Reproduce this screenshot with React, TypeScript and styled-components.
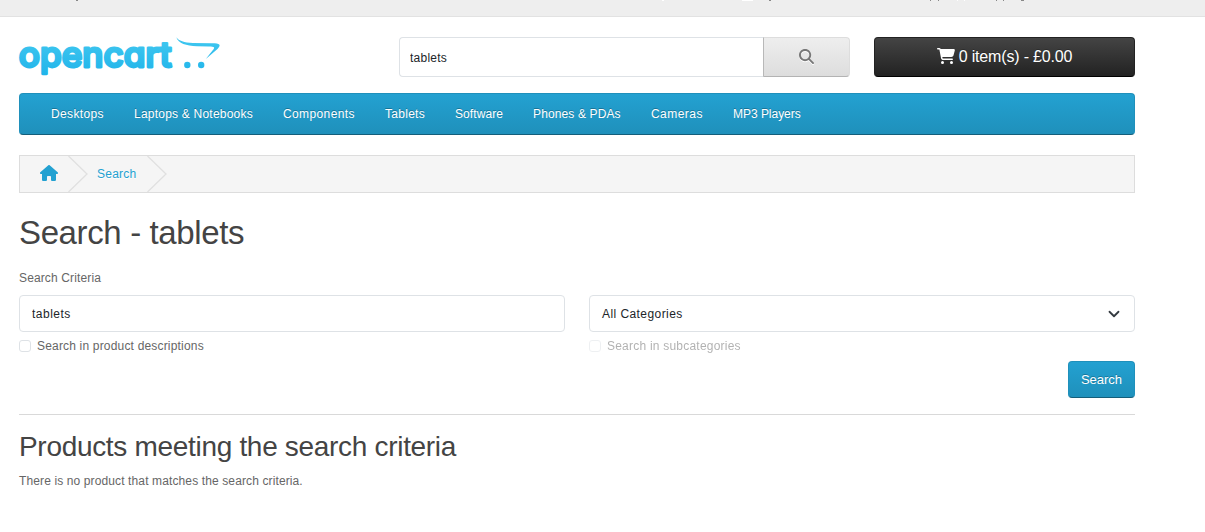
import React from "react";
import styled, { createGlobalStyle } from "styled-components";
import { FaCartShopping, FaHouse, FaMagnifyingGlass } from "react-icons/fa6";

const GlobalStyle = createGlobalStyle`
  * { box-sizing: border-box; }
  body {
    margin: 0;
    background: #fff;
    color: #666;
    font: 400 12px/18px "Liberation Sans", Arial, sans-serif;
  }
`;

const TopBar = styled.div`
  display: flex;
  height: 17px;
  background: #eee;
  border-bottom: 1px solid #e2e2e2;
`;

const Tail = styled.span<{ $gap: number; $width?: number; $light?: boolean }>`
  width: ${(p) => p.$width ?? 1}px;
  height: 1px;
  margin-left: ${(p) => p.$gap}px;
  background: ${(p) => (p.$light ? "#fff" : "#888")};
`;

const Container = styled.div`
  width: 1116px;
  margin-left: 19px;
`;

const Header = styled.header`
  display: flex;
  height: 40px;
  margin-top: 20px;
`;

const Logo = styled.svg`
  display: block;
  width: 204px;
  height: 40px;
  margin-right: 176px;
  overflow: visible;
`;

const SearchGroup = styled.div`
  display: flex;
  width: 451px;
  margin-right: 24px;
`;

const HeaderInput = styled.input`
  width: 365px;
  height: 40px;
  padding: 2px 10px 0;
  border: 1px solid #dee2e6;
  border-right: 0;
  border-radius: 4px 0 0 4px;
  outline: 0;
  color: #212529;
  font: inherit;
  letter-spacing: 0.25px;
`;

const SearchIconButton = styled.button`
  display: flex;
  align-items: center;
  justify-content: center;
  width: 87px;
  height: 40px;
  margin-left: -1px;
  padding: 0 0 1px;
  border: 1px solid #ddd;
  border-left-color: #b8b8b8;
  border-bottom-color: #b3b3b3;
  border-radius: 0 4px 4px 0;
  background: linear-gradient(#eee, #ddd);
  color: #777;
  font-size: 15px;
  svg { filter: drop-shadow(0 1px 0 #fff); }
`;

const CartButton = styled.button`
  display: flex;
  align-items: center;
  justify-content: center;
  gap: 4px;
  width: 261px;
  height: 40px;
  padding: 0 0 2px;
  border: 1px solid #222;
  border-color: #222 #222 #000;
  border-radius: 4px;
  background: linear-gradient(#444, #222);
  color: #fff;
  font: 16px/20px "Liberation Sans", Arial, sans-serif;
  letter-spacing: -0.17px;
  text-shadow: 0 -1px 0 rgba(0, 0, 0, 0.25);
  span { padding-top: 1px; }
`;

const Nav = styled.nav`
  display: flex;
  align-items: center;
  gap: 30px;
  height: 42px;
  margin-top: 16px;
  padding-left: 31px;
  border: 1px solid #1f90bb;
  border-bottom-color: #145e7a;
  border-radius: 4px;
  background: linear-gradient(#23a1d1, #1f90bb);
`;

const NavLink = styled.a<{ $width: number; $tracking: number }>`
  width: ${(p) => p.$width}px;
  letter-spacing: ${(p) => p.$tracking}px;
  color: #fff;
  white-space: nowrap;
  text-shadow: 0 -1px 0 rgba(0, 0, 0, 0.25);
`;

const Breadcrumb = styled.div`
  display: flex;
  align-items: center;
  height: 38px;
  margin-top: 20px;
  padding-left: 20px;
  border: 1px solid #ddd;
  background: #f5f5f5;
  color: #23a1d1;
`;

const Crumb = styled.a<{ $width: number }>`
  display: flex;
  width: ${(p) => p.$width}px;
  letter-spacing: 0.25px;
  text-shadow: 0 1px 0 #fff;
`;

const HomeIcon = styled(FaHouse)`
  width: 18px;
  height: 16px;
  margin-bottom: 2px;
`;

const Chevron = styled.svg`
  width: 20px;
  height: 36px;
  margin-right: 9px;
  fill: none;
  stroke: #e0e0e0;
  stroke-width: 1.3;
`;

const Title = styled.h1`
  margin: 20px 0 16px;
  color: #444;
  font-size: 33px;
  font-weight: 400;
  line-height: 40px;
  letter-spacing: -0.37px;
`;

const Subtitle = styled.h2`
  margin: 16px 0 9px;
  color: #444;
  font-size: 28px;
  font-weight: 400;
  line-height: 32px;
  letter-spacing: -0.31px;
`;

const Label = styled.div`
  margin-bottom: 8px;
  letter-spacing: 0.13px;
`;

const Columns = styled.div`
  display: grid;
  grid-template-columns: 1fr 1fr;
  gap: 24px;
`;

const Field = styled.input`
  display: block;
  width: 100%;
  height: 37px;
  padding: 0 12px;
  border: 1px solid #dee2e6;
  border-radius: 4px;
  outline: 0;
  color: #212529;
  font: inherit;
  letter-spacing: 0.5px;
`;

const Select = styled.div`
  display: flex;
  align-items: center;
  justify-content: space-between;
  height: 37px;
  padding: 0 14px 0 12px;
  border: 1px solid #dee2e6;
  border-radius: 4px;
  color: #212529;
  letter-spacing: 0.43px;
`;

const Check = styled.label<{ $disabled?: boolean }>`
  display: flex;
  align-items: center;
  gap: 6px;
  height: 18px;
  margin-top: 5px;
  letter-spacing: ${(p) => (p.$disabled ? 0.22 : 0.18)}px;
  opacity: ${(p) => (p.$disabled ? 0.5 : 1)};
`;

const Box = styled.span`
  width: 12px;
  height: 12px;
  border: 1px solid #dee2e6;
  border-radius: 3px;
  background: #fff;
`;

const Actions = styled.div`
  display: flex;
  justify-content: flex-end;
  margin-top: 6px;
  padding-bottom: 16px;
  border-bottom: 1px solid #d9d9d9;
`;

const PrimaryButton = styled.button`
  width: 67px;
  height: 37px;
  padding: 0;
  border: 1px solid #1f90bb;
  border-bottom-color: #145e7a;
  border-radius: 4px;
  background: linear-gradient(#23a1d1, #1f90bb);
  color: #fff;
  font: 13px/18px "Liberation Sans", Arial, sans-serif;
  text-shadow: 0 -1px 0 rgba(0, 0, 0, 0.25);
`;

const Message = styled.p`
  margin: 0;
  letter-spacing: 0.12px;
`;

const links = [
  { name: "Desktops", width: 53, tracking: 0.35 },
  { name: "Laptops & Notebooks", width: 119, tracking: 0.22 },
  { name: "Components", width: 72, tracking: 0.38 },
  { name: "Tablets", width: 40, tracking: 0.28 },
  { name: "Software", width: 48, tracking: 0.08 },
  { name: "Phones & PDAs", width: 88, tracking: 0.13 },
  { name: "Cameras", width: 52, tracking: 0.45 },
  { name: "MP3 Players", width: 68, tracking: -0.03 },
];

const Separator = () => (
  <Chevron viewBox="0 0 20 36">
    <path d="M0.5 0 19 18 0.5 36" />
  </Chevron>
);

export default function App() {
  return (
    <>
      <GlobalStyle />
      <TopBar>
        <Tail $gap={76} $width={2} />
        <Tail $gap={584} $width={2} $light />
        <Tail $gap={78} $width={11} $light />
        <Tail $gap={16} $width={2} />
        <Tail $gap={159} />
        <Tail $gap={7} />
        <Tail $gap={18} $light />
        <Tail $gap={6} $light />
        <Tail $gap={31} />
        <Tail $gap={6} />
        <Tail $gap={17} $width={3} />
      </TopBar>
      <Container>
        <Header>
          <Logo viewBox="0 0 204 40">
            <defs>
              <linearGradient id="logo" gradientUnits="userSpaceOnUse" x1="0" y1="0" x2="0" y2="38">
                <stop offset="0" stopColor="#42c8f0" />
                <stop offset="1" stopColor="#20b4ea" />
              </linearGradient>
            </defs>
            <text
              x="-0.3"
              y="29.8"
              textLength="153"
              lengthAdjust="spacingAndGlyphs"
              fill="url(#logo)"
              stroke="url(#logo)"
              strokeWidth="2.8"
              strokeLinejoin="round"
              fontFamily="Inter, sans-serif"
              fontWeight="500"
              fontSize="35"
              style={{ fontFeatureSettings: '"cv11"' }}
            >
              opencart
            </text>
            <g fill="url(#logo)">
              <path d="M157.3 0.3C160 4 165 5.600 174 6L193 6.300C201 6.300 202.500 8 198.500 12L186.800 22 193.500 13.500C196.500 10.300 195.500 9.500 190 9.500L178 9.300C167 8.800 159.500 6.500 157.300 0.300Z" />
              <circle cx="168.300" cy="28" r="3.200" />
              <circle cx="182.200" cy="28" r="3.200" />
            </g>
          </Logo>
          <SearchGroup>
            <HeaderInput defaultValue="tablets" />
            <SearchIconButton aria-label="Search">
              <FaMagnifyingGlass />
            </SearchIconButton>
          </SearchGroup>
          <CartButton>
            <FaCartShopping size={18} />
            <span>0 item(s) - £0.00</span>
          </CartButton>
        </Header>
        <Nav>
          {links.map((l) => (
            <NavLink key={l.name} $width={l.width} $tracking={l.tracking}>
              {l.name}
            </NavLink>
          ))}
        </Nav>
        <Breadcrumb>
          <Crumb $width={28}>
            <HomeIcon />
          </Crumb>
          <Separator />
          <Crumb $width={50}>Search</Crumb>
          <Separator />
        </Breadcrumb>
        <Title>Search - tablets</Title>
        <Label>Search Criteria</Label>
        <Columns>
          <div>
            <Field defaultValue="tablets" />
            <Check>
              <Box />
              Search in product descriptions
            </Check>
          </div>
          <div>
            <Select>
              All Categories
              <svg width="12" height="12" viewBox="0 0 16 16" fill="none" stroke="#343a40" strokeWidth="2.4" strokeLinecap="round" strokeLinejoin="round">
                <path d="m2 5 6 6 6-6" />
              </svg>
            </Select>
            <Check $disabled>
              <Box />
              Search in subcategories
            </Check>
          </div>
        </Columns>
        <Actions>
          <PrimaryButton>Search</PrimaryButton>
        </Actions>
        <Subtitle>Products meeting the search criteria</Subtitle>
        <Message>There is no product that matches the search criteria.</Message>
      </Container>
    </>
  );
}
